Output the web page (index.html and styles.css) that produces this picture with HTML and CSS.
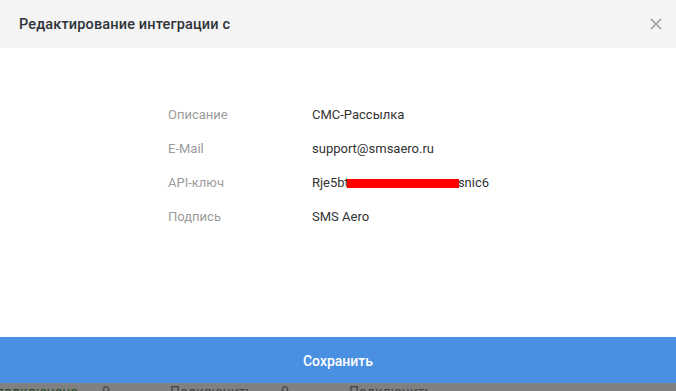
FILE: index.html
```html
<!DOCTYPE html>
<html lang="ru">
<head>
  <meta charset="UTF-8">
  <title>Редактирование интеграции</title>
  <link rel="stylesheet" href="styles.css">
</head>
<body>
  <div class="modal">
    <div class="modal-header">
      <div class="modal-title">Редактирование интеграции с</div>
      <svg class="modal-close" width="12" height="12" viewBox="0 0 12 12">
        <path d="M1 1L11 11M11 1L1 11" stroke="#9a9a9a" stroke-width="1.5" fill="none"/>
      </svg>
    </div>
    <div class="modal-body">
      <div class="info-grid">
        <div class="info-label">Описание</div>
        <div class="info-value">СМС-Рассылка</div>
        <div class="info-label">E-Mail</div>
        <div class="info-value">support@smsaero.ru</div>
        <div class="info-label">API-ключ</div>
        <div class="info-value">Rje5bt<span class="redacted"></span>snic6</div>
        <div class="info-label">Подпись</div>
        <div class="info-value">SMS Aero</div>
      </div>
    </div>
    <div class="modal-save">Сохранить</div>
  </div>
  <div class="backdrop-strip">
    <span class="strip-ok">подключено</span>
    <span class="strip-num">0</span>
    <span class="strip-link">Подключить</span>
    <span class="strip-num">0</span>
    <span class="strip-link">Подключить</span>
  </div>
</body>
</html>
```

FILE: styles.css
```css
body {
  margin: 0;
  width: 676px;
  height: 391px;
  overflow: hidden;
  background: #fff;
  font-family: Roboto, "Noto Sans", sans-serif;
}
.modal {
  display: flex;
  flex-direction: column;
  height: 383px;
}
.modal-header {
  display: flex;
  align-items: center;
  justify-content: space-between;
  height: 48px;
  padding: 0 14px 0 19px;
  background: #f4f4f4;
}
.modal-title {
  color: #2f3237;
  font-size: 14.5px;
  font-weight: 500;
  letter-spacing: 0.15px;
}
.modal-close {
  display: block;
}
.modal-body {
  flex: 1;
  padding: 49px 0 0 168px;
  background: #fff;
}
.info-grid {
  display: grid;
  grid-template-columns: 144px auto;
  grid-auto-rows: 34px;
  align-items: center;
  font-size: 13px;
}
.info-label {
  color: #9b9b9b;
}
.info-value {
  color: #333;
  white-space: nowrap;
}
.redacted {
  display: inline-block;
  width: 112px;
  height: 9px;
  margin-left: -2px;
  margin-right: -1px;
  background: #ff0000;
  vertical-align: -1px;
}
.modal-save {
  height: 46px;
  line-height: 48px;
  text-align: center;
  background: #4a90e2;
  color: #fff;
  font-size: 14px;
  font-weight: 500;
}
.backdrop-strip {
  display: flex;
  height: 8px;
  overflow: hidden;
  background: #808080;
  color: #444;
  font-size: 14px;
  line-height: 18px;
}
.strip-ok {
  flex: none;
  width: 106px;
  margin-left: -4px;
  color: #1f4a1f;
}
.strip-num {
  flex: none;
  width: 68px;
}
.strip-link {
  flex: none;
  width: 111px;
}
```
